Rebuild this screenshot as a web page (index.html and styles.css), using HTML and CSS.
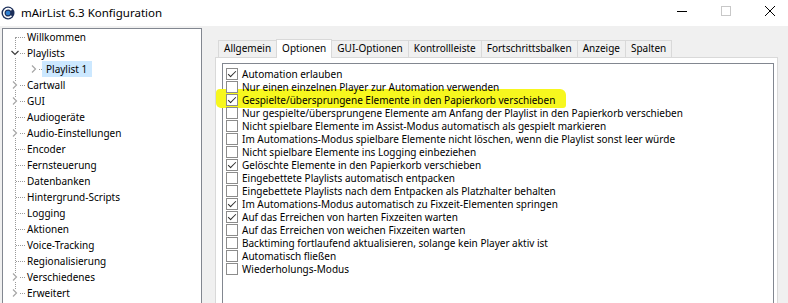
FILE: index.html
```html
<!DOCTYPE html>
<html lang="de">
<head>
    <meta charset="UTF-8">
    <title>mAirList 6.3 Konfiguration</title>
    <link rel="stylesheet" href="styles.css">
</head>
<body>

<div class="titlebar">
    <svg class="app-icon" width="14" height="14" viewBox="0 0 14 14">
        <circle cx="7" cy="7" r="6.5" fill="#1c2f5a"/>
        <path d="M10.5 4.2 A4.4 4.4 0 1 0 10.5 9.8" fill="none" stroke="#ffffff" stroke-width="1.6"/>
        <circle cx="7" cy="7" r="2.3" fill="#2f7fd0"/>
    </svg>
    <span class="title">mAirList 6.3 Konfiguration</span>
    <div class="winbtns">
        <svg width="12" height="12" viewBox="0 0 12 12"><line x1="1" y1="6.5" x2="11" y2="6.5" stroke="#000" stroke-width="1"/></svg>
        <svg width="12" height="12" viewBox="0 0 12 12"><rect x="1.5" y="1.5" width="9" height="9" fill="none" stroke="#c8c8c8" stroke-width="1"/></svg>
        <svg width="12" height="12" viewBox="0 0 12 12"><path d="M1 1 L11 11 M11 1 L1 11" stroke="#000" stroke-width="1"/></svg>
    </div>
</div>

<div class="main">
    <div class="tree">
        <div class="node"><span class="twig"></span><span class="label">Willkommen</span></div>
        <div class="node"><span class="twig"><svg class="chev open" width="8" height="8" viewBox="0 0 8 8"><path d="M0.5 2 L4 5.5 L7.5 2" fill="none" stroke="#3c3c3c" stroke-width="1.2"/></svg></span><span class="label">Playlists</span></div>
        <div class="node sub"><span class="twig"><svg class="chev" width="8" height="8" viewBox="0 0 8 8"><path d="M2 0.5 L5.5 4 L2 7.5" fill="none" stroke="#a6a6a6" stroke-width="1.2"/></svg></span><span class="label selected">Playlist 1</span></div>
        <div class="node"><span class="twig"><svg class="chev" width="8" height="8" viewBox="0 0 8 8"><path d="M2 0.5 L5.5 4 L2 7.5" fill="none" stroke="#a6a6a6" stroke-width="1.2"/></svg></span><span class="label">Cartwall</span></div>
        <div class="node"><span class="twig"><svg class="chev" width="8" height="8" viewBox="0 0 8 8"><path d="M2 0.5 L5.5 4 L2 7.5" fill="none" stroke="#a6a6a6" stroke-width="1.2"/></svg></span><span class="label">GUI</span></div>
        <div class="node"><span class="twig"></span><span class="label">Audiogeräte</span></div>
        <div class="node"><span class="twig"><svg class="chev" width="8" height="8" viewBox="0 0 8 8"><path d="M2 0.5 L5.5 4 L2 7.5" fill="none" stroke="#a6a6a6" stroke-width="1.2"/></svg></span><span class="label">Audio-Einstellungen</span></div>
        <div class="node"><span class="twig"></span><span class="label">Encoder</span></div>
        <div class="node"><span class="twig"></span><span class="label">Fernsteuerung</span></div>
        <div class="node"><span class="twig"></span><span class="label">Datenbanken</span></div>
        <div class="node"><span class="twig"></span><span class="label">Hintergrund-Scripts</span></div>
        <div class="node"><span class="twig"></span><span class="label">Logging</span></div>
        <div class="node"><span class="twig"></span><span class="label">Aktionen</span></div>
        <div class="node"><span class="twig"></span><span class="label">Voice-Tracking</span></div>
        <div class="node"><span class="twig"></span><span class="label">Regionalisierung</span></div>
        <div class="node"><span class="twig"><svg class="chev" width="8" height="8" viewBox="0 0 8 8"><path d="M2 0.5 L5.5 4 L2 7.5" fill="none" stroke="#a6a6a6" stroke-width="1.2"/></svg></span><span class="label">Verschiedenes</span></div>
        <div class="node"><span class="twig"><svg class="chev" width="8" height="8" viewBox="0 0 8 8"><path d="M2 0.5 L5.5 4 L2 7.5" fill="none" stroke="#a6a6a6" stroke-width="1.2"/></svg></span><span class="label">Erweitert</span></div>
    </div>

    <div class="pages">
        <div class="tabs">
            <div class="tab">Allgemein</div>
            <div class="tab active">Optionen</div>
            <div class="tab">GUI-Optionen</div>
            <div class="tab">Kontrollleiste</div>
            <div class="tab">Fortschrittsbalken</div>
            <div class="tab">Anzeige</div>
            <div class="tab">Spalten</div>
        </div>
        <div class="sheet">
            <div class="checklist">
                <div class="row"><span class="box checked"></span>Automation erlauben</div>
                <div class="row"><span class="box"></span>Nur einen einzelnen Player zur Automation verwenden</div>
                <div class="row marked"><span class="box checked"></span>Gespielte/übersprungene Elemente in den Papierkorb verschieben</div>
                <div class="row"><span class="box"></span>Nur gespielte/übersprungene Elemente am Anfang der Playlist in den Papierkorb verschieben</div>
                <div class="row"><span class="box"></span>Nicht spielbare Elemente im Assist-Modus automatisch als gespielt markieren</div>
                <div class="row"><span class="box"></span>Im Automations-Modus spielbare Elemente nicht löschen, wenn die Playlist sonst leer würde</div>
                <div class="row"><span class="box"></span>Nicht spielbare Elemente ins Logging einbeziehen</div>
                <div class="row"><span class="box checked"></span>Gelöschte Elemente in den Papierkorb verschieben</div>
                <div class="row"><span class="box"></span>Eingebettete Playlists automatisch entpacken</div>
                <div class="row"><span class="box"></span>Eingebettete Playlists nach dem Entpacken als Platzhalter behalten</div>
                <div class="row"><span class="box checked"></span>Im Automations-Modus automatisch zu Fixzeit-Elementen springen</div>
                <div class="row"><span class="box checked"></span>Auf das Erreichen von harten Fixzeiten warten</div>
                <div class="row"><span class="box"></span>Auf das Erreichen von weichen Fixzeiten warten</div>
                <div class="row"><span class="box"></span>Backtiming fortlaufend aktualisieren, solange kein Player aktiv ist</div>
                <div class="row"><span class="box"></span>Automatisch fließen</div>
                <div class="row"><span class="box"></span>Wiederholungs-Modus</div>
            </div>
        </div>
    </div>
</div>

</body>
</html>
```

FILE: styles.css
```css
body {
    margin: 0;
    width: 788px;
    height: 303px;
    overflow: hidden;
    background: #f0f0f0;
    font-family: "Noto Sans", "Open Sans", sans-serif;
    font-size: 10px;
    color: #000;
}

.titlebar {
    height: 26px;
    background: #fff;
    display: flex;
    align-items: center;
}

.app-icon {
    margin-left: 1px;
}

.title {
    margin-left: 6px;
    font-size: 11.5px;
    margin-top: -2px;
}

.winbtns {
    margin-left: auto;
    display: flex;
    gap: 32px;
    margin-right: 12px;
    margin-top: -4px;
}

.main {
    display: flex;
    align-items: flex-start;
}

/* tree on the left */
.tree {
    position: relative;
    width: 198px;
    height: 290px;
    margin: 2px 0 0 2px;
    background: #fff;
    border: 1px solid #828790;
}

.tree::before {
    content: "";
    position: absolute;
    left: 12px;
    top: 8px;
    height: 256px;
    border-left: 1px dotted #9a9a9a;
}

.node {
    display: flex;
    align-items: center;
    height: 16px;
}

.node.sub {
    padding-left: 19px;
}

.twig {
    position: relative;
    width: 20px;
    height: 16px;
    flex-shrink: 0;
}

.twig::after {
    content: "";
    position: absolute;
    left: 13px;
    top: 8px;
    width: 9px;
    border-top: 1px dotted #9a9a9a;
}

.chev {
    position: absolute;
    left: 8px;
    top: 4px;
    background: #fff;
    z-index: 1;
}

.label {
    position: relative;
    z-index: 1;
    padding: 0 4px;
    line-height: 16px;
}

.label.selected {
    background: #cce8ff;
    padding-right: 5px;
}

/* tabs */
.pages {
    margin: 12px 0 0 13px;
    width: 563px;
}

.tabs {
    display: flex;
    align-items: flex-end;
    padding-left: 3px;
    height: 19px;
}

.tab {
    height: 16px;
    line-height: 15px;
    padding: 0 5px;
    border: 1px solid #d9d9d9;
    border-bottom: none;
    margin-right: -1px;
    background: #f0f0f0;
}

.tab.active {
    height: 18px;
    background: #fff;
    position: relative;
    z-index: 1;
    margin-bottom: -1px;
    line-height: 16px;
}

.sheet {
    border: 1px solid #d9d9d9;
    background: #fff;
    height: 260px;
    padding: 5px 3px 0 6px;
}

.checklist {
    position: relative;
    z-index: 0;
    height: 260px;
    background: #fff;
    border: 1px solid #828790;
    padding-top: 3px;
}

.row {
    position: relative;
    display: flex;
    align-items: center;
    height: 13px;
    white-space: nowrap;
}

.row.marked::before {
    content: "";
    position: absolute;
    z-index: -1;
    left: -7px;
    top: -4px;
    width: 350px;
    height: 19px;
    background: #f7f71e;
    border-radius: 4px 6px 3px 5px;
}

.box {
    width: 10px;
    height: 10px;
    margin: 0 4px 0 3px;
    border: 1px solid #8c8c8c;
    background: #fff;
    position: relative;
    flex-shrink: 0;
}

.box.checked::after {
    content: "";
    position: absolute;
    left: 3px;
    top: 0px;
    width: 3px;
    height: 7px;
    border: solid #2b2b2b;
    border-width: 0 1px 1px 0;
    transform: rotate(45deg);
}
```
